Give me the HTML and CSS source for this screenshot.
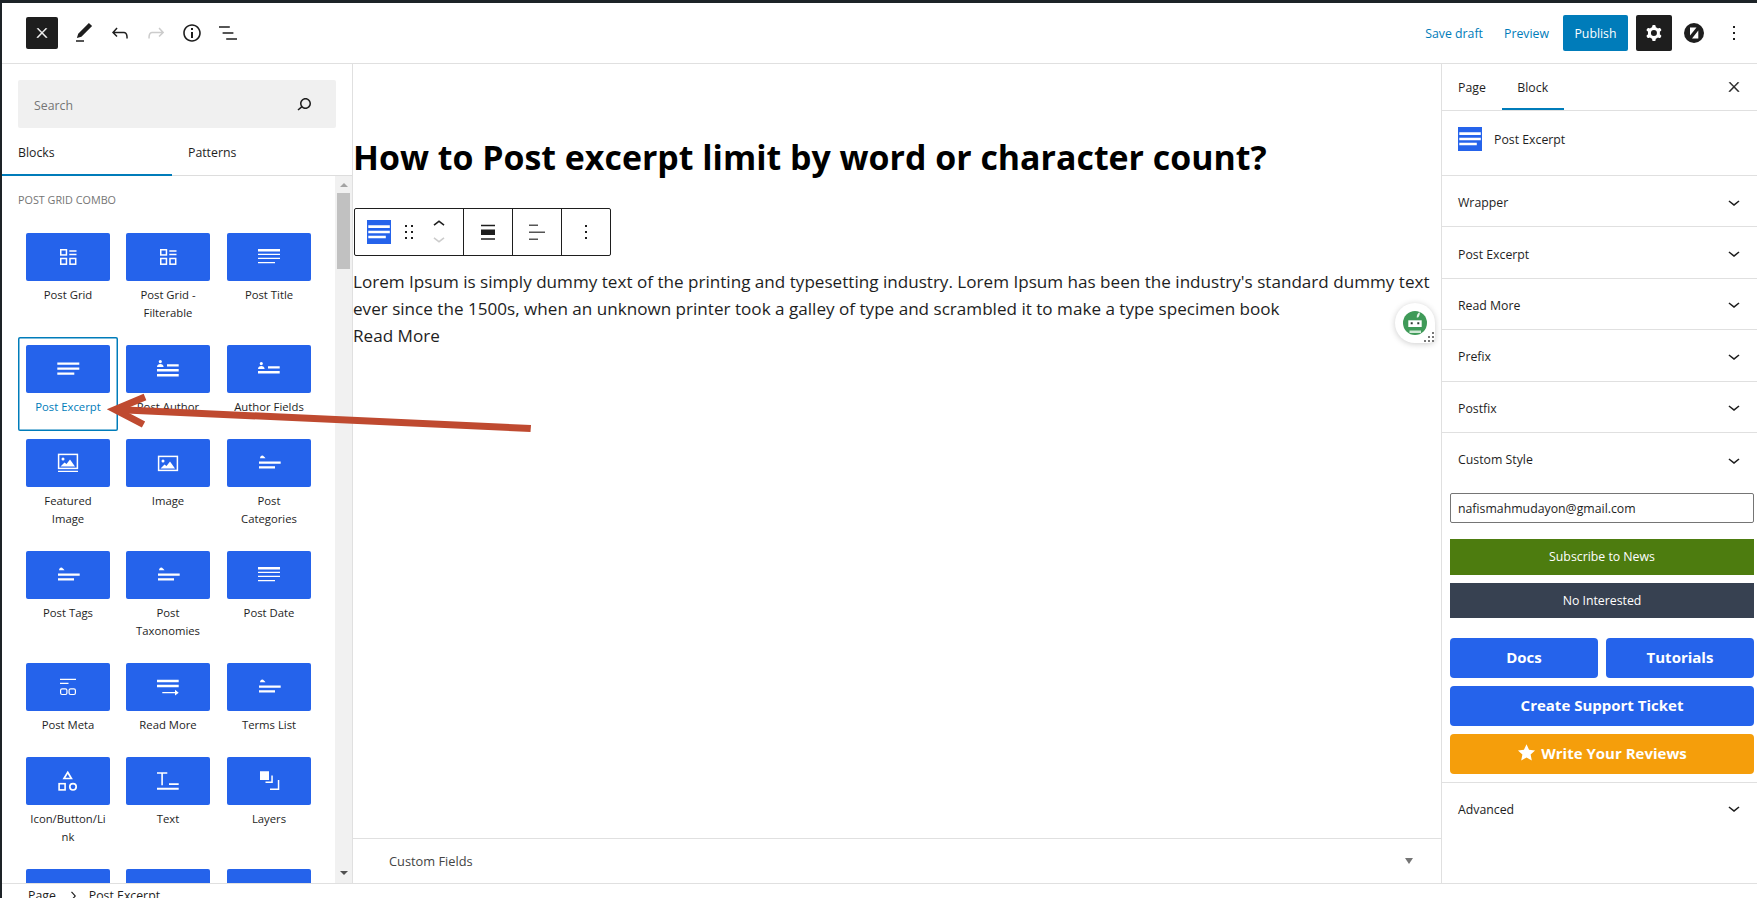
FILE: index.html
```html
<!DOCTYPE html>
<html lang="en">
<head>
    <meta charset="UTF-8">
    <meta name="viewport" content="width=device-width, initial-scale=1.0">
    <title>Edit Post</title>
    <link rel="stylesheet" href="styles.css">
</head>
<body>

    <!-- Block icons, reused through <use> -->
    <svg class="sprite" aria-hidden="true">
        <symbol id="i-grid" viewBox="0 0 24 24">
            <g fill="none" stroke="#fff" stroke-width="1.5">
                <rect x="4.75" y="4.75" width="5.7" height="5.2"/>
                <rect x="4.75" y="13.5" width="5.7" height="5.7"/>
                <rect x="14" y="13.5" width="5.7" height="5.7"/>
                <path d="M13.3 6h7.2M13.3 9.6h7.2"/>
            </g>
        </symbol>
        <symbol id="i-lines" viewBox="0 0 24 24">
            <path fill="#fff" d="M1 4h22v2.600H1zM1 8.800h22v1.300H1zM1 12.800h22v1.300H1zM1 17h17v1.300H1z"/>
        </symbol>
        <symbol id="i-excerpt" viewBox="0 0 24 24">
            <path fill="#fff" d="M1.300 5.600h22v2.200h-22zM1.300 10.400h22v2.400h-22zM1.300 15.600h17v2.200h-17z"/>
        </symbol>
        <symbol id="i-author" viewBox="0 0 24 24">
            <path fill="#fff" d="M4.300 3a1.600 1.600 0 1 1 0 3.200 1.600 1.600 0 0 1 0-3.200zM1 10c0-2 1.500-3 3.300-3s3.300 1 3.300 3zM11 7.200h11.700v2.400H11zM1 12h21.700v2.400H1zM1 17h21.700v2.400H1z"/>
        </symbol>
        <symbol id="i-fields" viewBox="0 0 24 24">
            <path fill="#fff" d="M4.300 5a1.600 1.600 0 1 1 0 3.200 1.600 1.600 0 0 1 0-3.200zM1 12c0-2 1.500-3 3.300-3s3.300 1 3.300 3zM11 9.200h11.700v2.400H11zM1 14h21.700v2.400H1z"/>
        </symbol>
        <symbol id="i-featured" viewBox="0 0 24 24">
            <rect x="2.600" y="3.400" width="18.800" height="14" fill="none" stroke="#fff" stroke-width="1.500"/>
            <path fill="#fff" d="M4.500 15.500l4-4 2 1.500 3.500-4.500 5 7zM7 6.500a1.500 1.500 0 1 1 0 3 1.500 1.500 0 0 1 0-3zM2 19.700h20v1.400H2z"/>
        </symbol>
        <symbol id="i-image" viewBox="0 0 24 24">
            <rect x="2.600" y="5.400" width="18.800" height="14" fill="none" stroke="#fff" stroke-width="1.500"/>
            <path fill="#fff" d="M4.500 17.500l4-4 2 1.500 3.500-4.500 5 7zM7 8.500a1.500 1.500 0 1 1 0 3 1.500 1.500 0 0 1 0-3z"/>
        </symbol>
        <symbol id="i-terms" viewBox="0 0 24 24">
            <path fill="#fff" d="M3 7.300c.3-1.800 1-2.800 2.300-2.800 1.100 0 2.200 1.500 3.200 2.800zM2 10.500h21.700v2.300H2zM2 15.300h16v2.300H2z"/>
        </symbol>
        <symbol id="i-meta" viewBox="0 0 24 24">
            <path fill="#fff" d="M4 3.700h16v1.200H4zM4 7.700h8.500v1.200H4z"/>
            <rect x="4.600" y="13.800" width="6.300" height="5.700" rx="1.500" fill="none" stroke="#fff" stroke-width="1.200"/>
            <rect x="13.100" y="13.800" width="6.300" height="5.700" rx="1.500" fill="none" stroke="#fff" stroke-width="1.200"/>
        </symbol>
        <symbol id="i-readmore" viewBox="0 0 24 24">
            <path fill="#fff" d="M1 4.800h21.700v2.400H1zM1 9.800h21.700v2.400H1zM6.300 17h14v1.300h-14zM19 14.800l3.700 2.900-3.700 2.900z"/>
        </symbol>
        <symbol id="i-iconbox" viewBox="0 0 24 24">
            <path fill="none" stroke="#fff" stroke-width="1.700" d="M11.700 3.300l3.700 6.200H8z"/>
            <rect x="3.100" y="14.700" width="6" height="6.200" fill="none" stroke="#fff" stroke-width="1.600"/>
            <circle cx="17" cy="17.800" r="3.200" fill="none" stroke="#fff" stroke-width="1.700"/>
        </symbol>
        <symbol id="i-text" viewBox="0 0 24 24">
            <path fill="#fff" d="M1 3.300h10.300v1.500H6.900v11.500H5.300V4.800H1zM13 14.200h9.700v1.800H13zM1 18.800h21.700v2H1z"/>
        </symbol>
        <symbol id="i-layers" viewBox="0 0 24 24">
            <path fill="#fff" d="M3 2.300h9v8.700H3zM14.300 6.500h1.500v7.500H8.500v-1.500h5.800zM20.800 11h1.500v10H13v-1.500h7.800z"/>
        </symbol>
        <symbol id="i-chevron" viewBox="0 0 24 24">
            <path d="M17.500 11.600L12 16l-5.500-4.400.9-1.200L12 14l4.500-3.600 1 1.200z"/>
        </symbol>
        <symbol id="i-close" viewBox="0 0 24 24">
            <path d="M13 11.800l6.100-6.300-1-1-6.100 6.200-6.100-6.200-1 1 6.100 6.300-6.500 6.700 1 1 6.500-6.600 6.500 6.600 1-1z"/>
        </symbol>
        <symbol id="i-kebab" viewBox="0 0 24 24">
            <path d="M13 19h-2v-2h2v2zm0-6h-2v-2h2v2zm0-6h-2V5h2v2z"/>
        </symbol>
        <symbol id="i-block" viewBox="0 0 24 24">
            <path fill="#2563eb" d="M0 0h24v24H0z"/>
            <path fill="#fff" d="M1.300 5.300h21.500v2.600H1.300zM1.300 10.800h21.500v2.400H1.300zM1.300 15.800h17.500v2.400H1.300z"/>
        </symbol>
    </svg>

    <div class="app">
        <div class="admin-edge">
            <span class="edge-blue one"></span>
            <span class="edge-blue two"></span>
        </div>

        <header class="topbar">
            <div class="topbar-left">
                <button class="close-btn"><svg class="icon-16 white heavy"><use href="#i-close"/></svg></button>
                <svg class="tool" viewBox="0 0 24 24"><path d="M20.100 5.100L16.900 2 6.200 12.700l-1.300 4.400 4.500-1.300L20.100 5.100zM4 20.800h8v-1.500H4v1.500z"/></svg>
                <svg class="tool" viewBox="0 0 24 24"><path d="M18.300 11.700c-.6-.6-1.400-.9-2.300-.9H6.700l2.900-3.300-1.100-1-4.500 5L8.500 16l1-1-2.700-2.700H16c.5 0 .9.2 1.300.5 1 1 1 3.400 1 4.500v.3h1.500v-.2c0-1.500 0-4.300-1.500-5.700z"/></svg>
                <svg class="tool off" viewBox="0 0 24 24"><path d="M15.600 6.500l-1.100 1 2.900 3.300H8c-.9 0-1.700.3-2.300.9-1.400 1.500-1.400 4.200-1.400 5.600v.2h1.500v-.3c0-1.100 0-3.500 1-4.500.3-.3.7-.5 1.300-.5h9.200L14.500 15l1.100 1.100 4.600-4.600-4.600-5z"/></svg>
                <svg class="tool" viewBox="0 0 24 24"><path d="M12 3.200c-4.800 0-8.800 3.900-8.800 8.800 0 4.800 3.900 8.800 8.800 8.800 4.800 0 8.800-3.900 8.800-8.800 0-4.800-4-8.800-8.800-8.800zm0 16c-4 0-7.200-3.300-7.200-7.200C4.800 8 8 4.800 12 4.800s7.200 3.300 7.200 7.200c0 4-3.200 7.200-7.200 7.200zM11 17h2v-6h-2v6zm0-8h2V7h-2v2z"/></svg>
                <svg class="tool" viewBox="0 0 24 24"><path d="M13.800 5.200H3v1.500h10.800V5.200zm-3.600 12v1.500H21v-1.500H10.200zm7.200-6H6.600v1.500h10.800v-1.500z"/></svg>
            </div>
            <div class="topbar-right">
                <a class="link save-link">Save draft</a>
                <a class="link preview-link">Preview</a>
                <button class="publish-btn">Publish</button>
                <button class="settings-btn">
                    <svg class="icon-24 white" viewBox="0 0 24 24"><path fill-rule="evenodd" d="M10.289 4.836A1 1 0 0111.275 4h1.306a1 1 0 01.987.836l.244 1.466c.787.26 1.503.679 2.108 1.218l1.393-.522a1 1 0 011.216.437l.653 1.130a1 1 0 01-.23 1.273l-1.148.944a6.025 6.025 0 010 2.435l1.149.946a1 1 0 01.23 1.272l-.653 1.130a1 1 0 01-1.216.437l-1.394-.522c-.605.54-1.320.958-2.108 1.218l-.244 1.466a1 1 0 01-.987.836h-1.306a1 1 0 01-.986-.836l-.244-1.466a5.995 5.995 0 01-2.108-1.218l-1.394.522a1 1 0 01-1.217-.436l-.653-1.131a1 1 0 01.23-1.272l1.149-.946a6.026 6.026 0 010-2.435l-1.148-.944a1 1 0 01-.23-1.272l.653-1.131a1 1 0 011.217-.437l1.393.522a5.994 5.994 0 012.108-1.218l.244-1.466zM14.929 12a3 3 0 11-6 0 3 3 0 016 0z"/></svg>
                </button>
                <svg class="jetpack" viewBox="0 0 20 20">
                    <circle cx="10" cy="10" r="10" fill="#1e1e1e"/>
                    <path fill="#fff" d="M6 4.500h6.500L6 12.500zM14.300 7.500v8H8z"/>
                </svg>
                <svg class="icon-24 kebab-top"><use href="#i-kebab"/></svg>
            </div>
        </header>

        <div class="workspace">
            <aside class="inserter">
                <div class="search-wrap">
                    <div class="search-box">
                        <span>Search</span>
                        <svg class="icon-24" viewBox="0 0 24 24"><path d="M13.500 6C10.500 6 8 8.500 8 11.500c0 1.100.3 2.100.9 3l-3.400 3 1 1.100 3.400-2.900c1 .9 2.200 1.400 3.600 1.400 3 0 5.500-2.500 5.500-5.500C19 8.500 16.500 6 13.500 6zm0 9.500c-2.200 0-4-1.800-4-4s1.800-4 4-4 4 1.800 4 4-1.800 4-4 4z"/></svg>
                    </div>
                </div>
                <div class="inserter-tabs">
                    <div class="inserter-tab active">Blocks</div>
                    <div class="inserter-tab">Patterns</div>
                </div>
                <div class="inserter-body">
                    <div class="block-list">
                        <h2 class="block-cat">Post Grid Combo</h2>
                        <div class="block-grid">
                            <div class="block-item"><div class="tile"><svg><use href="#i-grid"/></svg></div><div class="tile-name">Post Grid</div></div>
                            <div class="block-item"><div class="tile"><svg><use href="#i-grid"/></svg></div><div class="tile-name">Post Grid - Filterable</div></div>
                            <div class="block-item"><div class="tile"><svg><use href="#i-lines"/></svg></div><div class="tile-name">Post Title</div></div>
                            <div class="block-item selected"><div class="tile"><svg><use href="#i-excerpt"/></svg></div><div class="tile-name">Post Excerpt</div></div>
                            <div class="block-item"><div class="tile"><svg><use href="#i-author"/></svg></div><div class="tile-name">Post Author</div></div>
                            <div class="block-item"><div class="tile"><svg><use href="#i-fields"/></svg></div><div class="tile-name">Author Fields</div></div>
                            <div class="block-item"><div class="tile"><svg><use href="#i-featured"/></svg></div><div class="tile-name">Featured<br>Image</div></div>
                            <div class="block-item"><div class="tile"><svg><use href="#i-image"/></svg></div><div class="tile-name">Image</div></div>
                            <div class="block-item"><div class="tile"><svg><use href="#i-terms"/></svg></div><div class="tile-name">Post<br>Categories</div></div>
                            <div class="block-item"><div class="tile"><svg><use href="#i-terms"/></svg></div><div class="tile-name">Post Tags</div></div>
                            <div class="block-item"><div class="tile"><svg><use href="#i-terms"/></svg></div><div class="tile-name">Post<br>Taxonomies</div></div>
                            <div class="block-item"><div class="tile"><svg><use href="#i-lines"/></svg></div><div class="tile-name">Post Date</div></div>
                            <div class="block-item"><div class="tile"><svg><use href="#i-meta"/></svg></div><div class="tile-name">Post Meta</div></div>
                            <div class="block-item"><div class="tile"><svg><use href="#i-readmore"/></svg></div><div class="tile-name">Read More</div></div>
                            <div class="block-item"><div class="tile"><svg><use href="#i-terms"/></svg></div><div class="tile-name">Terms List</div></div>
                            <div class="block-item"><div class="tile"><svg><use href="#i-iconbox"/></svg></div><div class="tile-name">Icon/Button/Li<br>nk</div></div>
                            <div class="block-item"><div class="tile"><svg><use href="#i-text"/></svg></div><div class="tile-name">Text</div></div>
                            <div class="block-item"><div class="tile"><svg><use href="#i-layers"/></svg></div><div class="tile-name">Layers</div></div>
                            <div class="block-item"><div class="tile"></div></div>
                            <div class="block-item"><div class="tile"></div></div>
                            <div class="block-item"><div class="tile"></div></div>
                        </div>
                    </div>
                    <div class="fake-scrollbar">
                        <span class="arrow-up"></span>
                        <span class="thumb"></span>
                        <span class="arrow-down"></span>
                    </div>
                </div>
            </aside>

            <main class="editor">
                <div class="canvas">
                    <h1 class="post-title">How to Post excerpt limit by word or character count?</h1>
                    <div class="block-toolbar">
                        <div class="tb-group first">
                            <svg class="tb-block"><use href="#i-block"/></svg>
                            <svg class="tb-drag" viewBox="0 0 24 24"><path d="M8 7h2V5H8v2zm0 6h2v-2H8v2zm0 6h2v-2H8v2zm6-14v2h2V5h-2zm0 8h2v-2h-2v2zm0 6h2v-2h-2v2z"/></svg>
                            <div class="tb-mover">
                                <svg viewBox="0 0 24 14"><path d="M6.500 6.600L12 2.200l5.500 4.400-.9 1.200L12 4.200 7.500 7.800l-1-1.200z"/></svg>
                                <svg class="off" viewBox="0 0 24 14"><path d="M17.500 6.400L12 10.800 6.500 6.400l.9-1.200L12 8.800l4.500-3.600 1 1.200z"/></svg>
                            </div>
                        </div>
                        <div class="tb-group">
                            <svg class="icon-24" viewBox="0 0 24 24"><path d="M5 4.700h14v1.500H5zM5 9.500h14v5.500H5zM5 18.300h14v1.500H5z"/></svg>
                        </div>
                        <div class="tb-group">
                            <svg class="icon-24 grey" viewBox="0 0 24 24"><path d="M4 4.500h9V6H4zM4 11.500h16V13H4zM4 18.500h9V20H4z"/></svg>
                        </div>
                        <div class="tb-group">
                            <svg class="icon-24"><use href="#i-kebab"/></svg>
                        </div>
                    </div>
                    <div class="excerpt">
                        <p>Lorem Ipsum is simply dummy text of the printing and typesetting industry. Lorem Ipsum has been the industry's standard dummy text<br>ever since the 1500s, when an unknown printer took a galley of type and scrambled it to make a type specimen book</p>
                        <p>Read More</p>
                    </div>
                    <div class="bot-badge">
                        <svg viewBox="0 0 24 24">
                            <circle cx="12" cy="12" r="12" fill="#3f9a58"/>
                            <path fill="#e4f2e7" d="M13.700 6.500c0-2.500 1-4.400 3-5.200.4 1.900-.4 4-1.700 5.200z"/>
                            <path fill="#fff" d="M5.300 9.300h13.400V16H5.300z"/>
                            <path fill="#2d3b33" d="M7.700 11.300h2v2h-2zM14.300 11.300h2v2h-2z"/>
                            <path fill="#cfe8d5" d="M6.500 19.500h11.500v2.500H6.500z"/>
                        </svg>
                        <svg class="bot-grip" viewBox="0 0 10 10">
                            <path fill="#777" d="M8 0h2v2H8zM4 4h2v2H4zM8 4h2v2H8zM0 8h2v2H0zM4 8h2v2H4zM8 8h2v2H8z"/>
                        </svg>
                    </div>
                </div>
                <div class="meta-bar">
                    <span>Custom Fields</span>
                    <span class="meta-caret"></span>
                </div>
            </main>

            <aside class="settings">
                <div class="settings-tabs">
                    <div class="settings-tab">Page</div>
                    <div class="settings-tab active">Block</div>
                    <svg class="icon-16 tabs-close heavy"><use href="#i-close"/></svg>
                </div>
                <div class="block-card">
                    <svg class="icon-24"><use href="#i-block"/></svg>
                    <span>Post Excerpt</span>
                </div>
                <div class="panel-row">Wrapper<svg class="icon-24"><use href="#i-chevron"/></svg></div>
                <div class="panel-row">Post Excerpt<svg class="icon-24"><use href="#i-chevron"/></svg></div>
                <div class="panel-row">Read More<svg class="icon-24"><use href="#i-chevron"/></svg></div>
                <div class="panel-row">Prefix<svg class="icon-24"><use href="#i-chevron"/></svg></div>
                <div class="panel-row">Postfix<svg class="icon-24"><use href="#i-chevron"/></svg></div>
                <div class="panel-open">
                    <div class="panel-head">Custom Style<svg class="icon-24"><use href="#i-chevron"/></svg></div>
                    <div class="panel-body">
                        <input class="email-input" type="text" value="nafismahmudayon@gmail.com">
                        <button class="wide-btn green">Subscribe to News</button>
                        <button class="wide-btn slate">No Interested</button>
                        <div class="btn-pair">
                            <button class="promo-btn blue">Docs</button>
                            <button class="promo-btn blue">Tutorials</button>
                        </div>
                        <button class="promo-btn blue">Create Support Ticket</button>
                        <button class="promo-btn amber">
                            <svg class="star" viewBox="0 0 24 24"><path fill="#fff" d="M12 1.500l3.200 7 7.600.9-5.600 5.200 1.500 7.600L12 18.400l-6.700 3.800 1.500-7.600L1.200 9.400l7.600-.9z"/></svg>
                            Write Your Reviews
                        </button>
                    </div>
                </div>
                <div class="panel-row last">Advanced<svg class="icon-24"><use href="#i-chevron"/></svg></div>
            </aside>
        </div>

        <footer class="crumbs">
            <span>Page</span>
            <svg class="crumb-sep" viewBox="0 0 24 24"><path d="M10.600 6L9.400 7l4.600 5-4.600 5 1.200 1 5.400-6z"/></svg>
            <span>Post Excerpt</span>
        </footer>
    </div>

    <!-- Annotation drawn over the screenshot -->
    <svg class="annotation" viewBox="0 0 1757 898">
        <path fill="none" stroke="#bf4a30" stroke-width="7" d="M145 397L115 409.500L143.500 424.500"/>
        <path fill="#bf4a30" d="M115 406l416 19-.5 7L115 413z"/>
    </svg>

</body>
</html>
```

FILE: styles.css
```css
* {
    box-sizing: border-box;
}

body {
    margin: 0;
    overflow: hidden;
    background: #fff;
    color: #1e1e1e;
    font-family: "Open Sans", "Noto Sans", sans-serif;
    font-size: 12.3px;
}

button {
    font-family: inherit;
    border: none;
    cursor: pointer;
}

svg {
    fill: currentColor;
    flex-shrink: 0;
}

.sprite {
    display: none;
}

.icon-24 {
    width: 24px;
    height: 24px;
}

.icon-16 {
    width: 16px;
    height: 16px;
}

.white {
    color: #fff;
}

.grey {
    color: #555;
}

.off {
    color: #ccc;
}

.heavy {
    stroke: currentColor;
    stroke-width: 0.8;
}

.app {
    position: relative;
    display: flex;
    flex-direction: column;
    height: 898px;
    overflow: hidden;
    border-top: 3px solid #1d2327;
    border-left: 2px solid #1d2327;
}

/* admin menu showing behind the editor */
.admin-edge {
    position: absolute;
    left: -2px;
    top: -3px;
    width: 2px;
}

.edge-blue {
    position: absolute;
    width: 2px;
    background: #2271b1;
}

.edge-blue.one {
    top: 197px;
    height: 10px;
}

.edge-blue.two {
    top: 220px;
    height: 11px;
}

/* top bar */
.topbar {
    flex: 0 0 61px;
    display: flex;
    justify-content: space-between;
    align-items: center;
    border-bottom: 1px solid #e0e0e0;
    padding-bottom: 1px;
}

.topbar-left {
    display: flex;
    align-items: center;
    padding-left: 24px;
}

.close-btn {
    width: 32px;
    height: 32px;
    margin-right: 14px;
    padding: 0;
    background: #1e1e1e;
    border-radius: 2px;
    display: flex;
    align-items: center;
    justify-content: center;
}

.tool {
    width: 24px;
    height: 24px;
    margin-right: 12px;
}

.topbar-right {
    display: flex;
    align-items: center;
}

.link {
    color: #007cba;
    padding-top: 2px;
}

.save-link {
    margin-right: 21px;
}

.preview-link {
    margin-right: 14px;
}

.publish-btn {
    width: 65px;
    height: 36px;
    padding: 2px 0 0;
    background: #007cba;
    color: #fff;
    font-size: 12.3px;
    border-radius: 2px;
    margin-right: 8px;
}

.settings-btn {
    width: 36px;
    height: 36px;
    padding: 0;
    background: #1e1e1e;
    border-radius: 2px;
    display: flex;
    align-items: center;
    justify-content: center;
    margin-right: 12px;
}

.jetpack {
    width: 20px;
    height: 20px;
    margin-right: 18px;
}

.kebab-top {
    margin-right: 11px;
}

/* main row */
.workspace {
    flex: 1;
    min-height: 0;
    display: flex;
}

/* left inserter */
.inserter {
    width: 351px;
    border-right: 1px solid #e0e0e0;
    display: flex;
    flex-direction: column;
    min-height: 0;
}

.search-wrap {
    padding: 16px 16px 0;
}

.search-box {
    height: 48px;
    background: #f0f0f0;
    border-radius: 2px;
    display: flex;
    align-items: center;
    justify-content: space-between;
    padding: 0 20px 0 16px;
    color: #757575;
}

.search-box span {
    padding-top: 2px;
}

.search-box svg {
    color: #1e1e1e;
}

.inserter-tabs {
    display: flex;
    height: 48px;
    border-bottom: 1px solid #ddd;
}

.inserter-tab {
    width: 170px;
    padding-left: 16px;
    line-height: 50px;
    font-weight: 500;
}

.inserter-tab.active {
    box-shadow: inset 0 -2px 0 #007cba;
    height: 48px;
}

.inserter-body {
    flex: 1;
    min-height: 0;
    display: flex;
}

.block-list {
    flex: 1;
    padding: 16px 0 0 16px;
    overflow: hidden;
}

.block-cat {
    margin: 0 0 17px;
    font-size: 10.8px;
    line-height: 16px;
    font-weight: 500;
    text-transform: uppercase;
    color: #757575;
}

.block-grid {
    display: grid;
    grid-template-columns: 100px 101px 100px;
}

.block-item {
    padding: 8px 8px 15px;
    width: 100px;
    text-align: center;
    border-radius: 2px;
}

.block-item.selected {
    box-shadow: inset 0 0 0 1.5px #007cba;
}

.block-item.selected .tile-name {
    color: #007cba;
}

.tile {
    height: 48px;
    background: #2563eb;
    border-radius: 2px;
    display: flex;
    align-items: center;
    justify-content: center;
}

.tile svg {
    width: 24px;
    height: 24px;
}

.tile-name {
    margin-top: 5px;
    font-size: 11.3px;
    line-height: 18px;
}

.fake-scrollbar {
    width: 17px;
    background: #f1f1f1;
    position: relative;
    display: flex;
    flex-direction: column;
    align-items: center;
}

.thumb {
    position: absolute;
    top: 17px;
    left: 2px;
    width: 13px;
    height: 76px;
    background: #c1c1c1;
}

.arrow-up,
.arrow-down {
    position: absolute;
    width: 0;
    height: 0;
    border-left: 4px solid transparent;
    border-right: 4px solid transparent;
}

.arrow-up {
    top: 7px;
    border-bottom: 4px solid #a3a3a3;
}

.arrow-down {
    bottom: 8px;
    border-top: 4px solid #505050;
}

/* editor */
.editor {
    flex: 1;
    min-width: 0;
    display: flex;
    flex-direction: column;
}

.canvas {
    flex: 1;
    min-height: 0;
    position: relative;
}

.post-title {
    margin: 63px 0 0;
    font-size: 33.9px;
    line-height: 60px;
    font-weight: 700;
    color: #000;
}

.block-toolbar {
    display: inline-flex;
    margin: 21px 0 0 1px;
    height: 48px;
    border: 1px solid #1e1e1e;
    border-radius: 2px;
    vertical-align: top;
}

.tb-group {
    width: 49px;
    display: flex;
    align-items: center;
    justify-content: center;
    border-left: 1px solid #1e1e1e;
}

.tb-group.first {
    width: 108px;
    border-left: none;
    padding-left: 12px;
    justify-content: flex-start;
}

.tb-block {
    width: 24px;
    height: 24px;
}

.tb-drag {
    width: 24px;
    height: 24px;
    margin-left: 6px;
}

.tb-mover {
    width: 24px;
    margin-left: 6px;
    display: flex;
    flex-direction: column;
}

.tb-mover svg {
    width: 24px;
    height: 14px;
    display: block;
}

.excerpt {
    font-size: 17.1px;
    line-height: 27px;
    margin-top: 12px;
    color: #1e1e1e;
}

.excerpt p {
    margin: 0;
}

.bot-badge {
    position: absolute;
    left: 1042px;
    top: 239px;
    width: 40px;
    height: 40px;
    padding: 8px;
    border-radius: 50% 50% 6px 50%;
    background: #fff;
    box-shadow: 0 1px 6px rgba(0, 0, 0, 0.2);
}

.bot-badge svg {
    display: block;
    width: 24px;
    height: 24px;
}

.bot-badge .bot-grip {
    position: absolute;
    right: 1px;
    bottom: 1px;
    width: 10px;
    height: 10px;
}

.meta-bar {
    flex: 0 0 45px;
    border-top: 1px solid #e0e0e0;
    display: flex;
    align-items: center;
    justify-content: space-between;
    padding: 0 28px 0 36px;
    font-size: 12.8px;
    font-weight: 500;
    color: #444;
}

.meta-caret {
    width: 0;
    height: 0;
    border-left: 4px solid transparent;
    border-right: 4px solid transparent;
    border-top: 6px solid #757575;
}

/* right settings */
.settings {
    width: 316px;
    border-left: 1px solid #e0e0e0;
}

.settings-tabs {
    height: 47px;
    display: flex;
    border-bottom: 1px solid #e0e0e0;
    align-items: center;
    padding-left: 16px;
    position: relative;
}

.settings-tab {
    line-height: 48px;
    height: 46px;
    font-weight: 500;
}

.settings-tab.active {
    margin-left: 16px;
    padding: 0 15.5px;
    box-shadow: inset 0 -2px 0 #007cba;
}

.tabs-close {
    margin-left: auto;
    margin-right: 15px;
}

.block-card {
    height: 65px;
    padding: 16px 16px 0;
    display: flex;
    align-items: flex-start;
    gap: 12px;
    border-bottom: 1px solid #e0e0e0;
    font-weight: 500;
}

.block-card span {
    line-height: 26px;
}

.panel-row,
.panel-head {
    display: flex;
    align-items: center;
    justify-content: space-between;
    padding: 0 11px 0 16px;
    font-weight: 500;
}

.panel-row {
    height: 51.4px;
    padding-top: 3px;
    border-bottom: 1px solid #e0e0e0;
}

.panel-row svg {
    margin-top: -2px;
}

.panel-row.last {
    border-bottom: none;
    height: 53px;
    padding-top: 0;
}

.panel-head {
    height: 54px;
}

.panel-open {
    border-bottom: 1px solid #e0e0e0;
}

.panel-body {
    display: flex;
    flex-direction: column;
    gap: 8px;
    padding: 6px 3px 8px 8px;
}

.email-input {
    height: 30px;
    margin-bottom: 8px;
    padding: 2px 7px 0;
    border: 1px solid #757575;
    border-radius: 2px;
    font-family: inherit;
    font-size: 12.3px;
    color: #1e1e1e;
}

.wide-btn {
    height: 36px;
    color: #fff;
    font-size: 12.3px;
}

.green {
    background: #4d7c0f;
}

.slate {
    height: 35px;
    margin-bottom: 12px;
    background: #374151;
}

.btn-pair {
    display: flex;
    gap: 8px;
}

.btn-pair .promo-btn {
    flex: 1;
}

.promo-btn {
    height: 40px;
    padding-bottom: 2px;
    border-radius: 4px;
    color: #fff;
    font-size: 15px;
    font-weight: 700;
    display: flex;
    align-items: center;
    justify-content: center;
    gap: 5px;
}

.blue {
    background: #2563eb;
}

.amber {
    background: #f59e0b;
}

.star {
    width: 19px;
    height: 19px;
    margin-top: -2px;
}

/* breadcrumb, runs off the bottom of the window */
.crumbs {
    flex: 0 0 24px;
    display: flex;
    align-items: center;
    padding-left: 26px;
    border-top: 1px solid #e0e0e0;
    margin-bottom: -9px;
    color: #1e1e1e;
}

.crumb-sep {
    width: 18px;
    height: 18px;
    margin: 0 7px 0 8px;
}

/* red arrow over the page */
.annotation {
    position: absolute;
    left: 0;
    top: 0;
    width: 1757px;
    height: 898px;
    pointer-events: none;
}
```
